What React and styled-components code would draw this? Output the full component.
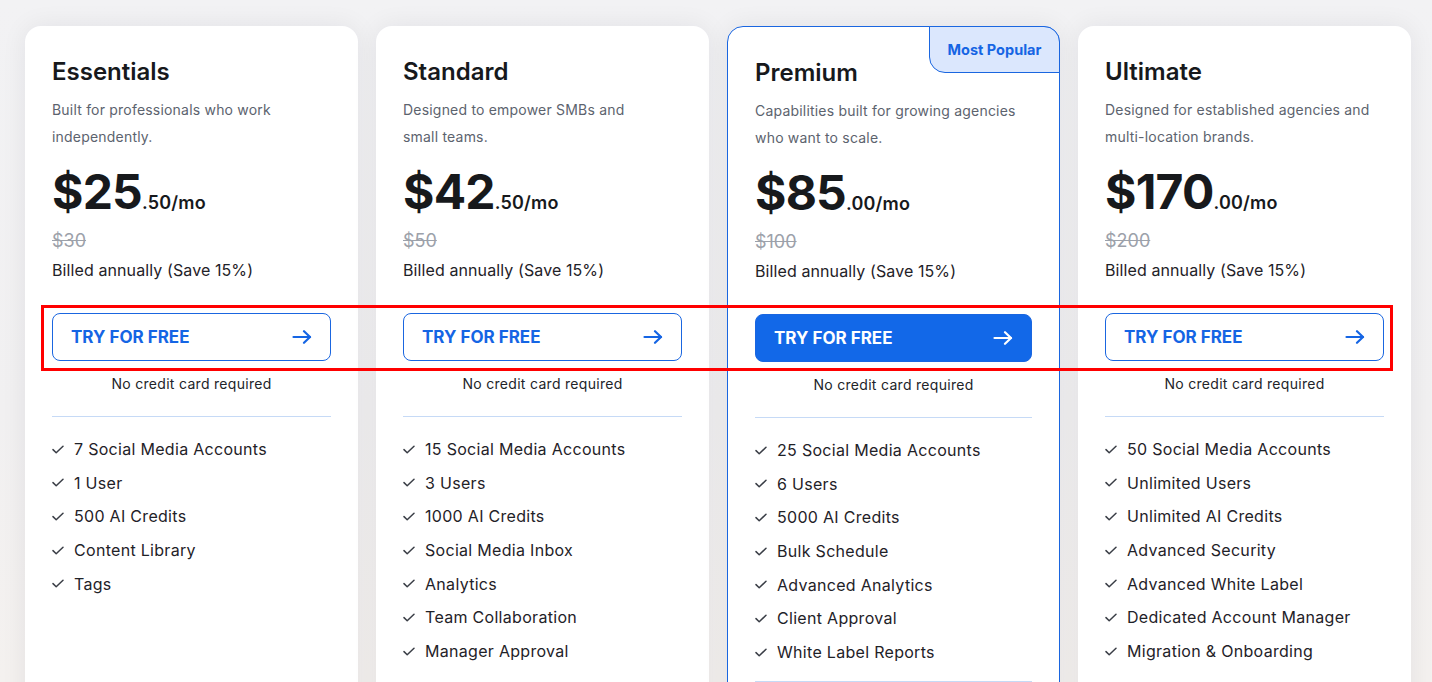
import React from 'react'
import styled, { createGlobalStyle, css } from 'styled-components'

const GlobalStyle = createGlobalStyle`
  html, body {
    margin: 0;
    padding: 0;
    height: 100%;
    overflow: hidden;
  }
  body {
    background: linear-gradient(180deg, #f2f2f4 0%, #f1f0f1 60%, #f4f1ef 100%);
    font-family: Inter, "Noto Sans", "Liberation Sans", sans-serif;
    color: #1b1d21;
  }
`

const plans = [
  {
    name: 'Essentials',
    desc: 'Built for professionals who work independently.',
    price: '$25',
    cents: '.50/mo',
    was: '$30',
    features: ['7 Social Media Accounts', '1 User', '500 AI Credits', 'Content Library', 'Tags'],
  },
  {
    name: 'Standard',
    desc: 'Designed to empower SMBs and small\u00a0teams.',
    price: '$42',
    cents: '.50/mo',
    was: '$50',
    features: [
      '15 Social Media Accounts',
      '3 Users',
      '1000 AI Credits',
      'Social Media Inbox',
      'Analytics',
      'Team Collaboration',
      'Manager Approval',
    ],
  },
  {
    name: 'Premium',
    desc: 'Capabilities built for growing agencies who want to scale.',
    price: '$85',
    cents: '.00/mo',
    was: '$100',
    popular: true,
    features: [
      '25 Social Media Accounts',
      '6 Users',
      '5000 AI Credits',
      'Bulk Schedule',
      'Advanced Analytics',
      'Client Approval',
      'White Label Reports',
    ],
  },
  {
    name: 'Ultimate',
    desc: 'Designed for established agencies and multi-location brands.',
    price: '$170',
    cents: '.00/mo',
    was: '$200',
    features: [
      '50 Social Media Accounts',
      'Unlimited Users',
      'Unlimited AI Credits',
      'Advanced Security',
      'Advanced White Label',
      'Dedicated Account Manager',
      'Migration & Onboarding',
    ],
  },
]

const Page = styled.main`
  position: relative;
  display: grid;
  grid-template-columns: repeat(4, 333px);
  gap: 18px;
  padding: 26px 21px 0 25px;
`

const Card = styled.section`
  position: relative;
  box-sizing: border-box;
  min-height: 720px;
  padding: 29px 27px 0;
  background: #fff;
  border-radius: 16px;
  box-shadow: 0 0 26px rgba(20, 20, 40, 0.07);
  ${({ $highlight }) =>
    $highlight &&
    css`
      border: 1px solid #1a66e0;
    `}
`

const Badge = styled.div`
  position: absolute;
  top: -1px;
  right: -1px;
  width: 131px;
  height: 47px;
  box-sizing: border-box;
  display: flex;
  align-items: center;
  justify-content: center;
  background: #dbe7fd;
  border: 1px solid #1a66e0;
  border-radius: 0 16px 0 16px;
  color: #1565e4;
  font-size: 14.5px;
  font-weight: 700;
`

const Title = styled.h2`
  margin: 0;
  font-size: 24px;
  line-height: 34px;
  font-weight: 600;
  color: #17191c;
`

const Desc = styled.p`
  margin: 7px 0 0;
  font-size: 14px;
  line-height: 27px;
  letter-spacing: 0.2px;
  color: #5c636e;
`

const PriceRow = styled.div`
  margin-top: 14px;
  height: 56px;
  display: flex;
  align-items: baseline;
  line-height: 56px;
  color: #17191c;
`

const Amount = styled.span`
  font-size: 48px;
  font-weight: 700;
  letter-spacing: -0.8px;
`

const Cents = styled.span`
  font-size: 18px;
  font-weight: 600;
  letter-spacing: 0.2px;
`

const Was = styled.div`
  margin-top: 8px;
  font-size: 18px;
  line-height: 25px;
  color: #9ca1aa;
  text-decoration: line-through;
`

const Billed = styled.div`
  margin-top: 5px;
  font-size: 16px;
  line-height: 24px;
  letter-spacing: 0.1px;
  color: #1f2228;
`

const TryButton = styled.button`
  margin-top: 31px;
  width: 100%;
  height: 48px;
  box-sizing: border-box;
  display: flex;
  align-items: center;
  justify-content: space-between;
  padding: 0 18px;
  border-radius: 8px;
  border: 1px solid #1a66e0;
  background: ${({ $primary }) => ($primary ? '#1268e8' : '#fff')};
  color: ${({ $primary }) => ($primary ? '#fff' : '#1565e4')};
  font-family: inherit;
  font-size: 17px;
  font-weight: 700;
  cursor: pointer;
`

const NoCard = styled.div`
  margin-top: 13px;
  text-align: center;
  font-size: 14px;
  line-height: 20px;
  letter-spacing: 0.3px;
  color: #222429;
`

const Divider = styled.hr`
  margin: ${({ $top }) => $top}px 0 0;
  border: 0;
  height: 1px;
  background: #c6daf6;
`

const Features = styled.ul`
  list-style: none;
  margin: 20px 0 0;
  padding: 0;
  display: flex;
  flex-direction: column;
  gap: 9.7px;
`

const Feature = styled.li`
  display: flex;
  align-items: center;
  gap: 10px;
  font-size: 16px;
  line-height: 24px;
  letter-spacing: 0.3px;
  color: #1f2228;
`

const Highlight = styled.div`
  position: absolute;
  left: 41px;
  top: 305px;
  width: 1352px;
  height: 66px;
  box-sizing: border-box;
  border: 3px solid #ff0000;
  pointer-events: none;
`

const Arrow = () => (
  <svg width="20" height="14" viewBox="0 0 20 14" fill="none" stroke="currentColor" strokeWidth="2.2" strokeLinecap="round" strokeLinejoin="round">
    <path d="M1.5 7h16.5" />
    <path d="M12 1.2 18 7l-6 5.8" />
  </svg>
)

const Check = () => (
  <svg width="12" height="9" viewBox="0 0 12 9" fill="none" stroke="#3a3e46" strokeWidth="1.5" strokeLinecap="round" strokeLinejoin="round">
    <path d="M1 4.6 4.2 7.8 11 1.2" />
  </svg>
)

export default function App() {
  return (
    <>
      <GlobalStyle />
      <Page>
        {plans.map((p) => (
          <Card key={p.name} $highlight={p.popular}>
            {p.popular && <Badge>Most Popular</Badge>}
            <Title>{p.name}</Title>
            <Desc>{p.desc}</Desc>
            <PriceRow>
              <Amount>{p.price}</Amount>
              <Cents>{p.cents}</Cents>
            </PriceRow>
            <Was>{p.was}</Was>
            <Billed>Billed annually (Save 15%)</Billed>
            <TryButton $primary={p.popular}>
              TRY FOR FREE
              <Arrow />
            </TryButton>
            <NoCard>No credit card required</NoCard>
            <Divider $top={22} />
            <Features>
              {p.features.map((f) => (
                <Feature key={f}>
                  <Check />
                  {f}
                </Feature>
              ))}
            </Features>
            {p.popular && <Divider $top={17} />}
          </Card>
        ))}
        <Highlight />
      </Page>
    </>
  )
}
